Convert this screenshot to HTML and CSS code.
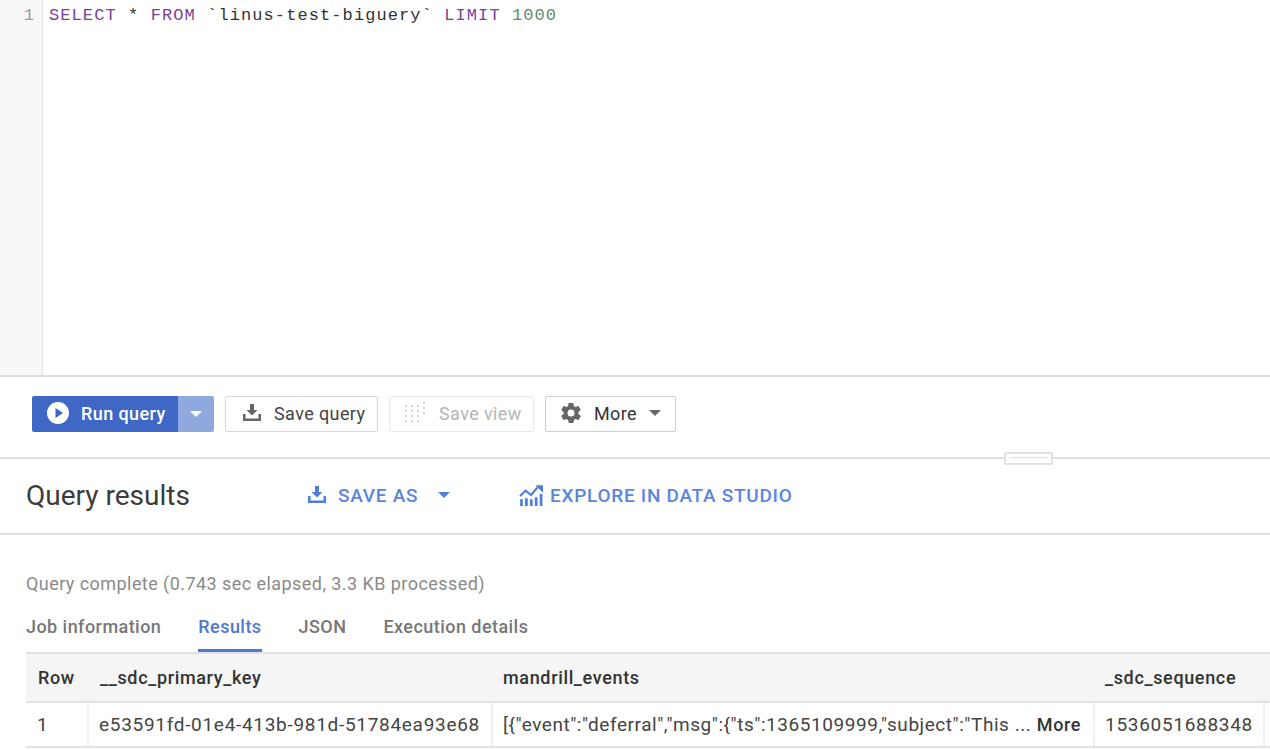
FILE: index.html
```html
<!DOCTYPE html>
<html lang="en">
<head>
<meta charset="utf-8">
<title>Query editor</title>
<link rel="stylesheet" href="styles.css">
</head>
<body>
<section class="editor">
  <div class="gutter">1</div>
  <pre class="code"><span class="kw">SELECT</span> * <span class="kw">FROM</span> `linus-test-biguery` <span class="kw">LIMIT</span> <span class="num">1000</span></pre>
</section>
<section class="toolbar">
  <div class="run-group">
    <button class="run">
      <svg class="ic24" viewBox="0 0 24 24"><path fill="#fff" d="M12 1a11 11 0 1 0 0 22 11 11 0 0 0 0-22zM9.500 17V7l7.500 5z"/></svg>
      <span>Run query</span>
    </button>
    <button class="run-drop"><i class="caret caret-white"></i></button>
  </div>
  <button class="btn btn-save">
    <svg class="ic20" viewBox="0 0 20 20"><path fill="#666" d="M8 1h4v6h3.500L10 12.500 4.500 7H8zM1 11h2.500v4.500h13V11H19v7H1z"/></svg>
    <span>Save query</span>
  </button>
  <button class="btn btn-view">
    <svg class="ic24" viewBox="0 0 24 24" fill="#c4c4c4"><circle cx="2" cy="5" r="1"/><circle cx="8" cy="5" r="1"/><circle cx="14" cy="5" r="1"/><circle cx="20" cy="2" r="1"/><circle cx="2" cy="10" r="1"/><circle cx="8" cy="10" r="1"/><circle cx="14" cy="10" r="1"/><circle cx="20" cy="7" r="1"/><circle cx="2" cy="15" r="1"/><circle cx="8" cy="15" r="1"/><circle cx="14" cy="15" r="1"/><circle cx="20" cy="12" r="1"/><circle cx="2" cy="20" r="1"/><circle cx="8" cy="20" r="1"/><circle cx="14" cy="20" r="1"/></svg>
    <span>Save view</span>
  </button>
  <button class="btn btn-more">
    <svg class="ic24" viewBox="0 0 24 24"><path fill="#666" d="M19.400 13c.04-.33.1-.66.1-1s-.06-.67-.1-1l2.100-1.650c.2-.15.25-.42.120-.64l-2-3.460c-.12-.22-.39-.3-.61-.22l-2.500 1c-.52-.4-1.080-.73-1.690-.98l-.38-2.650A.49.49 0 0 0 14 2h-4c-.25 0-.46.18-.49.42l-.38 2.650c-.61.25-1.170.59-1.690.98l-2.500-1c-.23-.09-.49 0-.61.22l-2 3.460c-.13.22-.07.49.12.640L4.600 11c-.04.33-.1.670-.1 1s.06.670.1 1l-2.100 1.650c-.19.15-.25.42-.12.640l2 3.460c.12.22.39.3.61.22l2.500-1c.52.4 1.080.73 1.690.98l.38 2.650c.03.24.24.42.49.42h4c.25 0 .46-.18.49-.42l.38-2.650c.61-.25 1.170-.59 1.690-.98l2.500 1c.23.09.49 0 .61-.22l2-3.460c.12-.22.07-.49-.12-.64zM12 15.500a3.500 3.500 0 1 1 0-7 3.500 3.500 0 0 1 0 7z"/></svg>
    <span>More</span>
    <i class="caret caret-grey"></i>
  </button>
  <div class="handle"></div>
</section>
<section class="results-head">
  <h2>Query results</h2>
  <a class="action action-save">
    <svg class="ic20" viewBox="0 0 20 20"><path fill="#4f7fdc" d="M8 1h4v6h3.500L10 12.500 4.500 7H8zM1 11h2.500v4.500h13V11H19v7H1z"/></svg>
    <span>SAVE AS</span>
    <i class="caret caret-blue"></i>
  </a>
  <a class="action action-studio">
    <svg class="ic24" viewBox="0 0 22 22"><path fill="#4f7fdc" d="M1 15h2.500v6H1zM5.500 14H8v7H5.500zM10 15h2.500v6H10zM14.500 13H17v8h-2.500zM19 10h2.500v11H19z"/><path fill="none" stroke="#4f7fdc" stroke-width="2" d="M1 12l5-5 5 4 6-7"/><path fill="#4f7fdc" d="M15 2h7v7z"/></svg>
    <span>EXPLORE IN DATA STUDIO</span>
  </a>
</section>
<section class="results">
  <p class="status">Query complete (0.743 sec elapsed, 3.3 KB processed)</p>
  <nav class="tabs">
    <a class="tab">Job information</a>
    <a class="tab tab-active">Results</a>
    <a class="tab">JSON</a>
    <a class="tab">Execution details</a>
  </nav>
  <div class="table">
    <div class="row row-head">
      <div class="cell c-row">Row</div>
      <div class="cell c-key">__sdc_primary_key</div>
      <div class="cell c-events">mandrill_events</div>
      <div class="cell c-seq">_sdc_sequence</div>
    </div>
    <div class="row row-body">
      <div class="cell c-row">1</div>
      <div class="cell c-key">e53591fd-01e4-413b-981d-51784ea93e68</div>
      <div class="cell c-events"><span class="json">[{"event":"deferral","msg":{"ts":1365109999,"subject":"This ...</span><b>More</b></div>
      <div class="cell c-seq">1536051688348</div>
    </div>
  </div>
</section>
</body>
</html>
```

FILE: styles.css
```css
* { box-sizing: border-box; }
html, body { margin: 0; padding: 0; }
body {
  width: 1270px;
  height: 750px;
  overflow: hidden;
  background: #fff;
  font-family: Roboto, "Liberation Sans", sans-serif;
  color: #444;
}
button { font-family: inherit; margin: 0; }
.editor {
  height: 377px;
  display: flex;
  border-bottom: 2px solid #dedede;
}
.gutter {
  width: 43px;
  flex: none;
  background: #f7f7f7;
  border-right: 1px solid #e4e4e4;
  padding: 6px 8px 0 0;
  text-align: right;
  font: 17px/19px "Liberation Mono", monospace;
  color: #999;
}
.code {
  margin: 0;
  padding: 6px 0 0 6px;
  font: 17px/19px "Liberation Mono", monospace;
  letter-spacing: 1.09px;
  color: #333;
}
.kw { color: #7b3f98; }
.num { color: #5d8a72; }
.toolbar {
  height: 82px;
  padding: 19px 0 0 32px;
  display: flex;
  align-items: flex-start;
  position: relative;
  border-bottom: 2px solid #dedede;
}
.run-group { display: flex; height: 36px; margin-right: 11px; }
.run {
  width: 146px;
  border: 0;
  border-radius: 2px 0 0 2px;
  background: #3f68c6;
  color: #fff;
  font-size: 18px;
  font-weight: 500;
  letter-spacing: .4px;
  padding: 0 0 2px 14px;
  display: flex;
  align-items: center;
  gap: 11px;
}
.run-drop {
  width: 36px;
  border: 0;
  border-radius: 0 2px 2px 0;
  background: #8fa8dd;
  display: flex;
  align-items: center;
  justify-content: center;
}
.btn {
  height: 36px;
  background: #fff;
  border: 1px solid #d9d9d9;
  border-radius: 2px;
  font-size: 18px;
  letter-spacing: .4px;
  color: #444;
  display: flex;
  align-items: center;
  padding: 0 0 2px;
}
.btn-save { width: 153px; padding-left: 16px; gap: 12px; margin-right: 11px; }
.btn-view { width: 145px; padding-left: 14px; gap: 11px; margin-right: 11px; color: #b5b5b5; border-color: #e8e8e8; }
.btn-more { width: 131px; padding-left: 13px; gap: 11px; color: #333; border-color: #cfcfcf; }
.ic20 { width: 20px; height: 20px; flex: none; }
.ic24 { width: 24px; height: 24px; flex: none; }
.caret { display: block; width: 0; height: 0; border-style: solid; border-width: 6px 6.500px 0; border-color: transparent; }
.caret-white { border-top-color: #fff; }
.caret-grey { border-top-color: #666; margin-left: 1px; }
.caret-blue { border-top-color: #4f7fdc; margin-left: 9px; }
.handle {
  position: absolute;
  left: 1004px;
  top: 75px;
  width: 49px;
  height: 13px;
  background: #fff;
  border: 2px solid #e2e2e2;
  border-radius: 2px;
}
.handle::after {
  content: "";
  display: block;
  margin: 3px auto 0;
  width: 37px;
  border-top: 1px solid #dcdcdc;
}
.results-head {
  height: 76px;
  border-bottom: 2px solid #dedede;
  display: flex;
  align-items: center;
  padding: 0 0 2px 26px;
}
.results-head h2 {
  margin: 0;
  width: 281px;
  font-size: 28px;
  font-weight: 400;
  color: #3c3c3c;
}
.action {
  display: flex;
  align-items: center;
  gap: 11px;
  font-size: 19px;
  font-weight: 500;
  letter-spacing: .72px;
  color: #5a86dd;
}
.action-save { width: 212px; }
.action-studio { gap: 7px; }
.results { padding: 0 0 0 26px; }
.status {
  margin: 0;
  padding-top: 39px;
  height: 73px;
  font-size: 18px;
  letter-spacing: .44px;
  line-height: 20px;
  color: #8a8a8a;
}
.tabs { display: flex; gap: 37px; height: 44px; }
.tab {
  padding-top: 9px;
  height: 44px;
  font-size: 18px;
  line-height: 20px;
  font-weight: 500;
  color: #777;
  letter-spacing: .45px;
}
.tab-active { color: #4f78d2; border-bottom: 3px solid #4f78d2; }
.row { display: flex; }
.row-head {
  height: 51px;
  background: #f5f5f5;
  border-top: 2px solid #e2e2e2;
  border-bottom: 2px solid #e2e2e2;
  font-weight: 500;
  color: #333;
}
.row-body {
  height: 45px;
  border-bottom: 2px solid #e2e2e2;
  color: #444;
}
.cell {
  display: flex;
  align-items: center;
  white-space: nowrap;
  flex: none;
  padding-left: 12px;
}
.row-head .cell { font-size: 18px; letter-spacing: .65px; }
.row-body .cell { font-size: 19px; letter-spacing: .7px; border-right: 2px solid #efefef; }
.row-head .c-row { width: 62px; }
.row-head .c-key { width: 403px; }
.row-head .c-events { width: 602px; }
.row-head .c-seq { flex: 1; }
.row-body .c-row { width: 63px; padding-left: 11px; }
.row-body .c-key { width: 404px; padding-left: 10px; }
.row-body .c-events { width: 602px; padding-left: 10px; padding-right: 12px; justify-content: space-between; }
.row-body .c-seq { width: 170px; padding-left: 10px; }
.json { letter-spacing: .55px; }
.row-body b { font-size: 18px; letter-spacing: .6px; font-weight: 500; color: #333; }
```
